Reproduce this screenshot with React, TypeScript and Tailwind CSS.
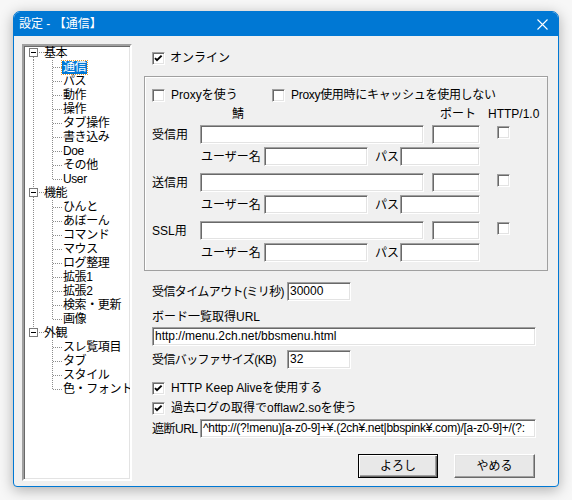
import type { ReactNode } from 'react'

// ツリーの項目定義
const tree = [
  { label: '基本', children: ['通信', 'パス', '動作', '操作', 'タブ操作', '書き込み', 'Doe', 'その他', 'User'] },
  { label: '機能', children: ['ひんと', 'あぼーん', 'コマンド', 'マウス', 'ログ整理', '拡張1', '拡張2', '検索・更新', '画像'] },
  { label: '外観', children: ['スレ覧項目', 'タブ', 'スタイル', '色・フォント'] },
]

const sunken =
  'border border-t-[#a0a0a0] border-l-[#a0a0a0] border-b-white border-r-white bg-white shadow-[inset_1px_1px_0_#696969,inset_-1px_-1px_0_#e3e3e3]'

const Checkbox = ({ checked = false }: { checked?: boolean }): JSX.Element => (
  <div className={`h-[13px] w-[13px] shrink-0 ${sunken}`}>
    {checked ? (
      <svg width="11" height="11" viewBox="0 0 11 11" className="block">
        <path d="M2 5.2 L4 7.2 L8.6 2.6" fill="none" stroke="#000" strokeWidth="1.9" />
      </svg>
    ) : null}
  </div>
)

const Field = ({ className = '', value = '' }: { className?: string; value?: string }): JSX.Element => (
  <div
    className={`h-[19px] shrink-0 overflow-hidden whitespace-nowrap pl-[2px] pt-[1px] text-[12px] leading-[15px] text-black ${sunken} ${className}`}
  >
    {value}
  </div>
)

const Button = ({ children, primary = false }: { children: ReactNode; primary?: boolean }): JSX.Element => (
  <div
    className={`flex h-[24px] items-center justify-center text-[12px] ${
      primary
        ? 'w-[80px] border border-black bg-[#e8e8e8] shadow-[inset_1px_1px_0_white,inset_-1px_-1px_0_#696969,inset_-2px_-2px_0_#a0a0a0]'
        : 'w-[81px] border border-t-white border-l-white border-b-[#696969] border-r-[#696969] bg-[#e8e8e8] shadow-[inset_-1px_-1px_0_#a0a0a0,inset_1px_1px_0_#e3e3e3]'
    }`}
  >
    {children}
  </div>
)

const dots = { stroke: '#8c8c8c', strokeDasharray: '1 1', shapeRendering: 'crispEdges' as const }

const RootRow = ({ label, first, last }: { label: string; first: boolean; last: boolean }): JSX.Element => (
  <div className="flex h-[14px] items-center">
    <svg width="20" height="14" className="shrink-0">
      {!first ? <line x1="9.5" y1="0" x2="9.5" y2="2" {...dots} /> : null}
      <rect x="5.5" y="2.5" width="8" height="8" fill="white" stroke="#7a7a7a" shapeRendering="crispEdges" />
      <line x1="7" y1="6.5" x2="12" y2="6.5" stroke="#000" shapeRendering="crispEdges" />
      <line x1="15" y1="6.5" x2="20" y2="6.5" {...dots} />
      {!last ? <line x1="9.5" y1="11" x2="9.5" y2="14" {...dots} /> : null}
    </svg>
    <span className="leading-[14px]">{label}</span>
  </div>
)

const ChildRow = ({
  label,
  rootLine,
  lastChild,
  selected,
}: {
  label: string
  rootLine: boolean
  lastChild: boolean
  selected: boolean
}): JSX.Element => (
  <div className="flex h-[14px] items-center">
    <svg width="20" height="14" className="shrink-0">
      {rootLine ? <line x1="9.5" y1="0" x2="9.5" y2="14" {...dots} /> : null}
    </svg>
    <svg width="18" height="14" className="shrink-0">
      <line x1="8.5" y1="0" x2="8.5" y2={lastChild ? 8 : 14} {...dots} />
      <line x1="9" y1="7.5" x2="18" y2="7.5" {...dots} />
    </svg>
    <span
      className={`px-[1px] leading-[13px] ${
        selected ? 'bg-[#0078d7] text-white outline outline-1 outline-dotted outline-[#e8962a]' : ''
      }`}
    >
      {label}
    </span>
  </div>
)

const Tree = (): JSX.Element => (
  <div className="h-[437px] w-[110px] shrink-0 overflow-hidden border-2 border-t-[#a0a0a0] border-l-[#a0a0a0] border-b-white border-r-white bg-white text-[12px] tracking-[-0.4px] shadow-[inset_1px_1px_0_#696969,inset_-1px_-1px_0_#e3e3e3]">
    {tree.map((group, gi) => (
      <div key={group.label}>
        <RootRow label={group.label} first={gi === 0} last={gi === tree.length - 1} />
        {group.children.map((child, ci) => (
          <ChildRow
            key={child}
            label={child}
            rootLine={gi !== tree.length - 1}
            lastChild={ci === group.children.length - 1}
            selected={child === '通信'}
          />
        ))}
      </div>
    ))}
  </div>
)

// 受信・送信・SSL の各サーバ設定
const ServerBlock = ({ label, first }: { label: string; first?: boolean }): JSX.Element => (
  <div className={first ? 'mt-[5px]' : 'mt-[7px]'}>
    <div className="flex items-start pl-[7px]">
      <span className="w-[48px] pt-[3px] leading-[14px]">{label}</span>
      <Field className="w-[224px]" />
      <Field className="ml-[8px] w-[48px]" />
      <div className="ml-[17px] mt-[1px]">
        <Checkbox />
      </div>
    </div>
    <div className="mt-[3px] flex items-start pl-[55px]">
      <span className="w-[64px] pl-[1px] pt-[3px] leading-[14px]">ユーザー名</span>
      <Field className="w-[104px]" />
      <span className="w-[32px] pl-[7px] pt-[3px] leading-[14px]">パス</span>
      <Field className="w-[80px]" />
    </div>
  </div>
)

export default function App(): JSX.Element {
  return (
    <div className="h-[500px] w-[572px] overflow-hidden whitespace-nowrap bg-[#f7f7f7] pl-[13px] pt-[11px] font-['Liberation_Sans','Noto_Sans_CJK_JP',sans-serif] text-[12px] text-black">
      <div className="h-[476px] w-[546px] overflow-hidden rounded-t-[7px] rounded-b-[4px] border border-[#0078d4] bg-[#f0f0f0] shadow-[0_3px_14px_rgba(0,0,0,0.3)]">
        {/* タイトルバー */}
        <div className="flex h-[24px] items-center justify-between bg-[#0078d4] pl-[5px] pr-[10px] text-white">
          <span className="text-[12px] leading-[14px]">設定 - 【通信】</span>
          <svg width="11" height="11" viewBox="0 0 11 11">
            <path d="M0.5 0.5 L10.5 10.5 M10.5 0.5 L0.5 10.5" stroke="white" strokeWidth="1.1" />
          </svg>
        </div>

        <div className="flex pl-[8px] pt-[8px]">
          <Tree />

          <div className="ml-[12px] w-[404px]">
            <div className="mt-[8px] flex h-[13px] items-center pl-[8px]">
              <Checkbox checked />
              <span className="ml-[5px] leading-[13px]">オンライン</span>
            </div>

            {/* Proxy 設定グループ */}
            <div className="mt-[11px] h-[195px] border border-[#a0a0a0] shadow-[inset_1px_1px_0_white]">
              <div className="mt-[12px] flex h-[13px] items-center pl-[7px]">
                <div className="flex w-[120px] items-center">
                  <Checkbox />
                  <span className="ml-[6px] leading-[13px]">Proxyを使う</span>
                </div>
                <Checkbox />
                <span className="ml-[6px] tracking-[-0.3px] leading-[13px]">Proxy使用時にキャッシュを使用しない</span>
              </div>
              <div className="mt-[6px] flex h-[12px] items-center pl-[87px] leading-[12px]">
                <span className="w-[208px]">鯖</span>
                <span className="w-[48px]">ポート</span>
                <span>HTTP/1.0</span>
              </div>
              <ServerBlock label="受信用" first />
              <ServerBlock label="送信用" />
              <ServerBlock label="SSL用" />
            </div>

            <div className="mt-[11px] flex items-center pl-[8px]">
              <span className="w-[135px] tracking-[-0.6px] leading-[14px]">受信タイムアウト(ミリ秒)</span>
              <Field className="w-[64px]" value="30000" />
            </div>
            <div className="mt-[10px] pl-[8px] leading-[12px]">ボード一覧取得URL</div>
            <Field className="ml-[8px] mt-[4px] w-[384px]" value="http://menu.2ch.net/bbsmenu.html" />
            <div className="mt-[4px] flex items-center pl-[8px]">
              <span className="w-[135px] tracking-[-0.6px] leading-[14px]">受信バッファサイズ(KB)</span>
              <Field className="w-[64px]" value="32" />
            </div>

            <div className="mt-[13px] flex h-[13px] items-center pl-[8px]">
              <Checkbox checked />
              <span className="ml-[6px] leading-[13px]">HTTP Keep Aliveを使用する</span>
            </div>
            <div className="mt-[7px] flex h-[13px] items-center pl-[8px]">
              <Checkbox checked />
              <span className="ml-[6px] leading-[13px]">過去ログの取得でofflaw2.soを使う</span>
            </div>
            <div className="mt-[4px] flex items-center pl-[8px]">
              <span className="w-[48px] tracking-[-0.5px] leading-[14px]">遮断URL</span>
              <Field
                className="w-[336px] tracking-[-0.3px]"
                value="^http://(?!menu)[a-z0-9]+¥.(2ch¥.net|bbspink¥.com)/[a-z0-9]+/(?:"
              />
            </div>

            <div className="mt-[16px] flex justify-end gap-[16px] pr-[13px]">
              <Button primary>よろし</Button>
              <Button>やめる</Button>
            </div>
          </div>
        </div>
      </div>
    </div>
  )
}
